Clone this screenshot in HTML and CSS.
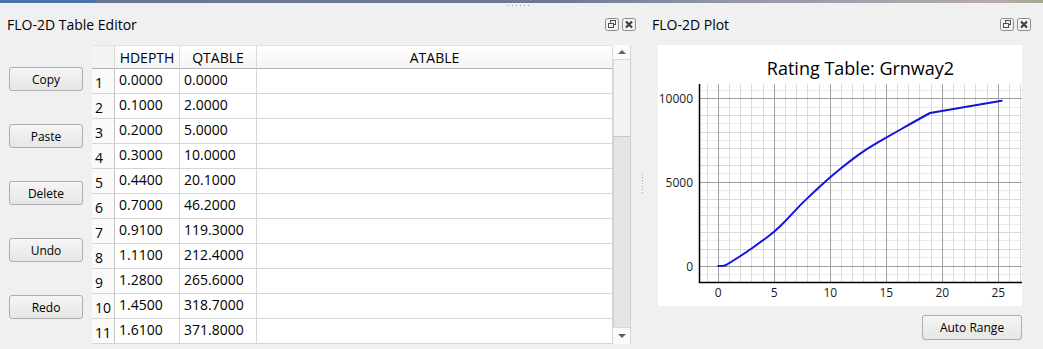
FILE: index.html
```html
<!DOCTYPE html>
<html>
<head>
<meta charset="utf-8">
<title>FLO-2D</title>
<link rel="stylesheet" href="styles.css">
</head>
<body>
<div class="topstrip"></div>
<div class="hgrip"><span></span></div>
<div class="main">
  <section class="dock dock-left">
    <header class="dock-title">
      <span class="dock-name">FLO-2D Table Editor</span>
      <div class="dock-btns">
        <svg class="ic" width="14" height="13" viewBox="0 0 14 13"><rect x="0.5" y="0.5" width="13" height="12" rx="2" fill="#f2f2f2" stroke="#8c8c8c"/><rect x="5.5" y="2.5" width="5" height="4" fill="none" stroke="#505050"/><rect x="3.5" y="5.5" width="5" height="4" fill="#f2f2f2" stroke="#505050"/></svg>
        <svg class="ic" width="14" height="13" viewBox="0 0 14 13"><rect x="0.5" y="0.5" width="13" height="12" rx="2" fill="#f2f2f2" stroke="#8c8c8c"/><path d="M4 3.5 L10 9.5 M10 3.5 L4 9.5" stroke="#404040" stroke-width="2.2"/></svg>
      </div>
    </header>
    <div class="dock-body">
      <div class="btn-col">
        <button class="btn">Copy</button>
        <button class="btn">Paste</button>
        <button class="btn">Delete</button>
        <button class="btn">Undo</button>
        <button class="btn">Redo</button>
      </div>
      <div class="table-wrap">
        <div class="cells">
          <div class="hd corner"></div>
          <div class="hd">HDEPTH</div>
          <div class="hd">QTABLE</div>
          <div class="hd">ATABLE</div>

          <div class="rh">1</div><div class="c">0.0000</div><div class="c">0.0000</div><div class="c"></div>
          <div class="rh">2</div><div class="c">0.1000</div><div class="c">2.0000</div><div class="c"></div>
          <div class="rh">3</div><div class="c">0.2000</div><div class="c">5.0000</div><div class="c"></div>
          <div class="rh">4</div><div class="c">0.3000</div><div class="c">10.0000</div><div class="c"></div>
          <div class="rh">5</div><div class="c">0.4400</div><div class="c">20.1000</div><div class="c"></div>
          <div class="rh">6</div><div class="c">0.7000</div><div class="c">46.2000</div><div class="c"></div>
          <div class="rh">7</div><div class="c">0.9100</div><div class="c">119.3000</div><div class="c"></div>
          <div class="rh">8</div><div class="c">1.1100</div><div class="c">212.4000</div><div class="c"></div>
          <div class="rh">9</div><div class="c">1.2800</div><div class="c">265.6000</div><div class="c"></div>
          <div class="rh">10</div><div class="c">1.4500</div><div class="c">318.7000</div><div class="c"></div>
          <div class="rh">11</div><div class="c">1.6100</div><div class="c">371.8000</div><div class="c"></div>
        </div>
        <div class="vscroll">
          <div class="sb-btn"><span class="arr-up"></span></div>
          <div class="sb-handle"></div>
          <div class="sb-track"></div>
          <div class="sb-btn sb-down"><span class="arr-down"></span></div>
        </div>
      </div>
    </div>
  </section>

  <div class="splitter"><span class="vgrip"></span></div>

  <section class="dock dock-right">
    <header class="dock-title title-right">
      <span class="dock-name">FLO-2D Plot</span>
      <div class="dock-btns">
        <svg class="ic" width="14" height="13" viewBox="0 0 14 13"><rect x="0.5" y="0.5" width="13" height="12" rx="2" fill="#f2f2f2" stroke="#8c8c8c"/><rect x="5.5" y="2.5" width="5" height="4" fill="none" stroke="#505050"/><rect x="3.5" y="5.5" width="5" height="4" fill="#f2f2f2" stroke="#505050"/></svg>
        <svg class="ic" width="14" height="13" viewBox="0 0 14 13"><rect x="0.5" y="0.5" width="13" height="12" rx="2" fill="#f2f2f2" stroke="#8c8c8c"/><path d="M4 3.5 L10 9.5 M10 3.5 L4 9.5" stroke="#404040" stroke-width="2.2"/></svg>
      </div>
    </header>
    <div class="plot">
      <svg class="chart" width="364" height="261" viewBox="0 0 364 261">
        <text class="ctitle" x="202.5" y="30" text-anchor="middle">Rating Table: Grnway2</text>
        <g class="sub" stroke="#ececec" stroke-width="1">
          <path d="M41 229.5H364M41 212.5H364M41 195.5H364M41 179.5H364M41 162.5H364M41 145.5H364M41 128.5H364M41 112.5H364M41 95.5H364M41 78.5H364M41 62.5H364M41 45.5H364"/>
        </g>
        <g class="minor" stroke="#d9d9d9" stroke-width="1">
          <path d="M49.5 39V237M71.5 39V237M82.5 39V237M93.5 39V237M105.5 39V237M127.5 39V237M138.5 39V237M149.5 39V237M161.5 39V237M183.5 39V237M194.5 39V237M205.5 39V237M217.5 39V237M239.5 39V237M250.5 39V237M261.5 39V237M273.5 39V237M295.5 39V237M306.5 39V237M317.5 39V237M329.5 39V237M351.5 39V237M362.5 39V237"/>
          <path d="M41 204.5H364M41 187.5H364M41 170.5H364M41 154.5H364M41 120.5H364M41 103.5H364M41 87.5H364M41 70.5H364"/>
        </g>
        <g class="major" stroke="#a0a0a0" stroke-width="1">
          <path d="M60.5 39V237M116.5 39V237M172.5 39V237M228.5 39V237M284.5 39V237M340.5 39V237"/>
          <path d="M41 221.5H364M41 137.5H364M41 53.5H364"/>
        </g>
        <path d="M41.5 39V237.5H364" fill="none" stroke="#000" stroke-width="1.5"/>
        <path class="curve" fill="none" stroke="#1414dc" stroke-width="2" stroke-linejoin="round" stroke-linecap="round"
          d="M60.3,221 L65.5,220.75 Q67,220.5 68,220 Q69,219.5 73,217 Q77,214.5 82.85,210.75 Q88.7,207 95.35,202.25 Q102,197.5 109.15,192.25 Q116.3,187 122.65,180.75 Q129,174.5 135.5,167.4 Q142,160.3 149.5,153.15 Q157,146 164.65,139 Q172.3,132 181.15,124.75 Q190,117.5 199.35,110.6 Q208.7,103.7 220.35,97.1 Q232,90.5 242.5,84.5 Q253,78.5 262.5,73.25 L272,68 L343.7,55.7"/>
        <g class="ylab" text-anchor="end">
          <text x="35" y="58">10000</text>
          <text x="35" y="142">5000</text>
          <text x="35" y="225.5">0</text>
        </g>
        <g class="xlab" text-anchor="middle">
          <text x="60.3" y="252">0</text>
          <text x="116.3" y="252">5</text>
          <text x="172.3" y="252">10</text>
          <text x="228.3" y="252">15</text>
          <text x="284.3" y="252">20</text>
          <text x="340.3" y="252">25</text>
        </g>
      </svg>
    </div>
    <button class="btn auto">Auto Range</button>
  </section>
</div>
</body>
</html>
```

FILE: styles.css
```css
* { box-sizing: border-box; }
html, body { margin: 0; padding: 0; }
body {
  width: 1043px;
  height: 349px;
  overflow: hidden;
  background: #f0f0f0;
  font-family: "Open Sans", "Noto Sans", sans-serif;
  color: #000;
}
.topstrip {
  height: 3px;
  background: linear-gradient(to right, #4c74aa 0, #4c74aa 95px, #6a7494 96px, #6f7896 560px, #8d93a6 700px, #a7a6ae 900px, #b9a9a9 1000px, #a3aa8e 1043px);
}
.hgrip { height: 8px; }
.hgrip span {
  display: block;
  width: 22px;
  height: 1px;
  margin: 2px 0 0 508px;
  background: repeating-linear-gradient(to right, #9a9a9a 0, #9a9a9a 1px, transparent 1px, transparent 4px);
}
.main { display: flex; height: 338px; }
.dock { display: flex; flex-direction: column; }
.dock-left { width: 638px; }
.dock-right { width: 393px; }
.dock-title {
  height: 22px;
  display: flex;
  align-items: center;
  justify-content: space-between;
  padding: 0 2px 0 7px;
  font-size: 14px;
}
.title-right { padding: 0 12px 0 2px; }
.dock-btns { display: flex; gap: 3px; }
.ic { display: block; }

.dock-body { display: flex; margin-top: 10px; }
.btn-col {
  width: 74px;
  margin: 0 9px 0 9px;
  padding-top: 22px;
  display: flex;
  flex-direction: column;
  gap: 33px;
}
.btn {
  height: 24px;
  padding: 0;
  border: 1px solid #adadad;
  border-radius: 3px;
  background: linear-gradient(#f5f5f5, #e6e6e6);
  font-family: "Open Sans", "Noto Sans", sans-serif;
  font-size: 12px;
  color: #000;
}
.table-wrap { display: flex; height: 299px; }
.cells {
  display: grid;
  grid-template-columns: 23px 65px 77px 356px;
  grid-template-rows: 24px;
  grid-auto-rows: 25px;
  font-size: 14px;
}
.hd {
  background: linear-gradient(#ffffff, #f4f4f4);
  border-top: 1px solid #e2e2e2;
  border-right: 1px solid #dadada;
  border-bottom: 1px solid #b4b4b4;
  display: flex;
  align-items: center;
  justify-content: center;
}
.corner { background: #f3f3f3; }
.rh {
  background: #fafafa;
  border-right: 1px solid #c4c4c4;
  border-bottom: 1px solid #d6d6d6;
  padding: 2px 0 0 3px;
  display: flex;
  align-items: center;
}
.c {
  background: #fff;
  border-right: 1px solid #d6d6d6;
  border-bottom: 1px solid #d6d6d6;
  padding: 0 0 3px 4px;
  display: flex;
  align-items: center;
}
.vscroll {
  width: 18px;
  display: flex;
  flex-direction: column;
  border-right: 1px solid #d0d0d0;
}
.sb-btn {
  height: 15px;
  background: #fbfbfb;
  border-bottom: 1px solid #d6d6d6;
  display: flex;
  align-items: center;
  justify-content: center;
}
.sb-down { height: 17px; border-bottom: none; border-top: 1px solid #d6d6d6; }
.sb-handle { height: 77px; background: #f3f3f3; border-left: 1px solid #dcdcdc; border-bottom: 1px solid #c8c8c8; }
.sb-track { height: 190px; background: #e4e4e4; border-left: 1px solid #d0d0d0; }
.arr-up, .arr-down { width: 0; height: 0; border-left: 4px solid transparent; border-right: 4px solid transparent; }
.arr-up { border-bottom: 4px solid #606060; }
.arr-down { border-top: 4px solid #606060; }

.splitter { width: 12px; padding: 161px 0 0 4px; }
.vgrip {
  display: block;
  width: 1px;
  height: 20px;
  background: repeating-linear-gradient(to bottom, #a8a8a8 0, #a8a8a8 1px, transparent 1px, transparent 3px);
}

.plot {
  width: 364px;
  height: 261px;
  margin: 10px 0 0 8px;
  background: #fff;
}
.chart { display: block; font-family: "Open Sans", "Noto Sans", sans-serif; }
.ctitle { font-size: 18px; fill: #000; }
.ylab, .xlab { font-size: 12px; fill: #1a1a1a; }
.auto {
  align-self: flex-end;
  width: 100px;
  height: 25px;
  margin: 9px 21px 0 0;
}
```
